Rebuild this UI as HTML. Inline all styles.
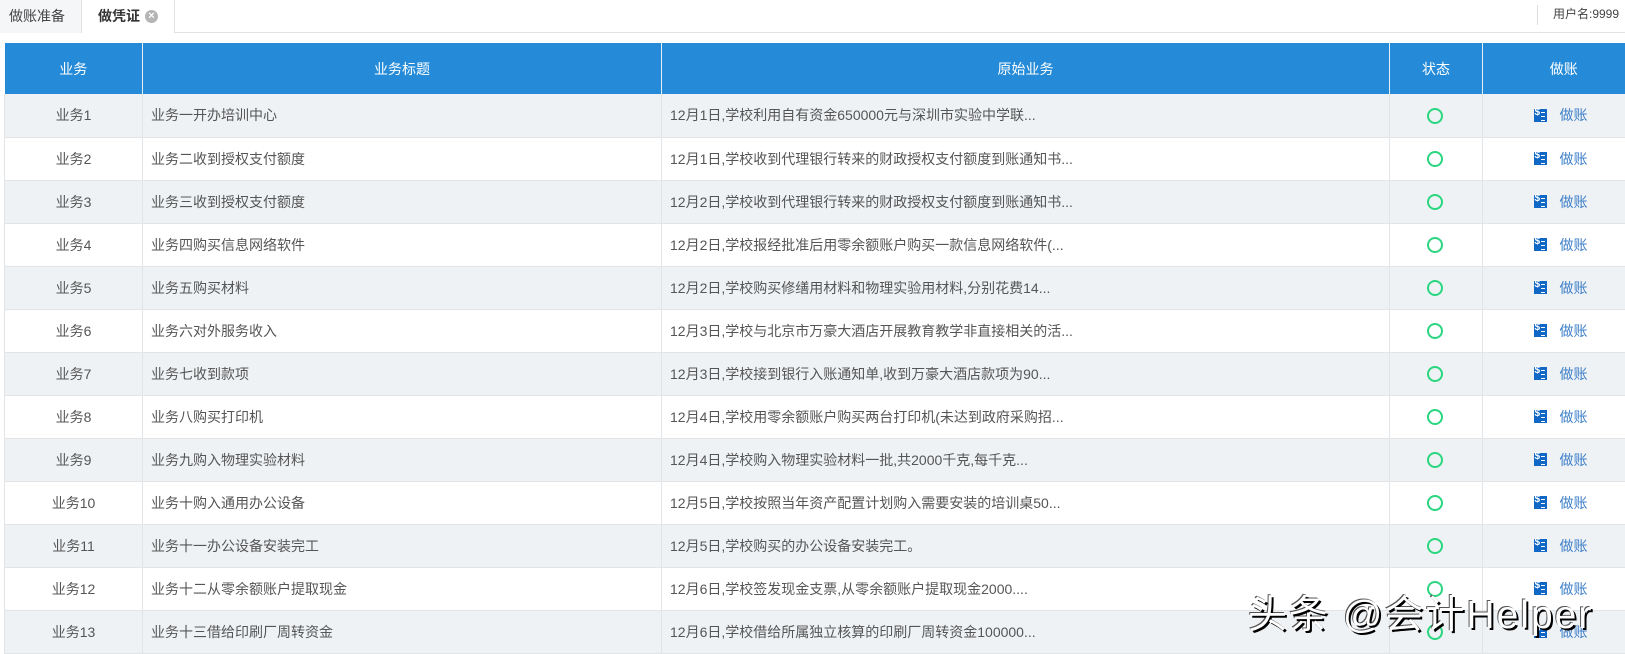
<!DOCTYPE html>
<html><head><meta charset="utf-8"><style>
*{margin:0;padding:0;box-sizing:border-box}
body{width:1625px;height:654px;overflow:hidden;background:#fff;font-family:"Liberation Sans","Noto Sans CJK SC",sans-serif;color:#555;position:relative}
.topbar{position:absolute;left:0;top:0;width:1625px;height:33px;border-bottom:1px solid #e2e2e2}
.tab1{position:absolute;left:0;top:0;width:82px;height:33px;background:#f4f6f8;border-right:1px solid #e2e2e2;font-size:14px;line-height:32px;padding-left:9px;color:#444}
.tab2{position:absolute;left:82px;top:0;width:93px;height:33px;background:#fff;border-right:1px solid #e2e2e2;font-size:14px;line-height:32px;padding-left:16px;color:#333;font-weight:bold}
.close{position:absolute;left:63px;top:10px;width:13px;height:13px;border-radius:50%;background:#b5b5b5;color:#fff;font-size:11px;line-height:13px;text-align:center;font-weight:bold}
.user{position:absolute;left:1537px;top:5px;height:20px;border-left:1px solid #ddd;padding-left:15px;font-size:12px;line-height:18px;color:#444}
table{position:absolute;left:4px;top:43px;border-collapse:collapse;width:1640px;table-layout:fixed}
th{background:#258bd8;color:#fff;font-weight:normal;font-size:14px;height:51px;border-left:1px solid #e8eef4;text-align:center}
td{height:43px;font-size:14px;border:1px solid #e2e4e6;border-top:none}
tr:nth-child(even) td{background:#eff2f5}
tr:nth-child(odd) td{background:#fff}
td.c{text-align:center}
td.l{padding-left:8px}
.circ{display:inline-block;width:16px;height:16px;border:2px solid #2ad67f;border-radius:50%;vertical-align:middle;margin-left:-2px}
.ic{display:inline-block;width:13px;height:13px;background:#1167c6;vertical-align:middle;position:relative;margin-left:-6px}
.ic:before{content:"$";position:absolute;left:1px;top:-2px;color:#fff;font-size:10px;font-weight:bold}
.ic:after{content:"";position:absolute;left:7px;top:3px;width:4px;height:7px;border-top:1px solid #fff;border-bottom:1px solid #fff;background:linear-gradient(#fff,#fff) 0 3px/4px 1px no-repeat}
.zz{color:#3d7fc8;margin-left:13px;vertical-align:middle}
.wm{position:absolute;left:1248px;top:584px;font-size:39px;color:#fff;text-shadow:2px 2px 0 #000,-1px -1px 0 #555;letter-spacing:2px;white-space:nowrap}
</style></head><body>
<div class="topbar">
<div class="tab1">做账准备</div>
<div class="tab2">做凭证<span class="close">×</span></div>
<div class="user">用户名:9999</div>
</div>
<table>
<colgroup><col style="width:138px"><col style="width:519px"><col style="width:728px"><col style="width:93px"><col style="width:162px"></colgroup>
<tr><th style="border-left:none">业务</th><th>业务标题</th><th>原始业务</th><th>状态</th><th>做账</th></tr>
<tr><td class="c">业务1</td><td class="l">业务一开办培训中心</td><td class="l">12月1日,学校利用自有资金650000元与深圳市实验中学联...</td><td class="c"><span class="circ"></span></td><td class="c"><span class="ic"></span><span class="zz">做账</span></td></tr>
<tr><td class="c">业务2</td><td class="l">业务二收到授权支付额度</td><td class="l">12月1日,学校收到代理银行转来的财政授权支付额度到账通知书...</td><td class="c"><span class="circ"></span></td><td class="c"><span class="ic"></span><span class="zz">做账</span></td></tr>
<tr><td class="c">业务3</td><td class="l">业务三收到授权支付额度</td><td class="l">12月2日,学校收到代理银行转来的财政授权支付额度到账通知书...</td><td class="c"><span class="circ"></span></td><td class="c"><span class="ic"></span><span class="zz">做账</span></td></tr>
<tr><td class="c">业务4</td><td class="l">业务四购买信息网络软件</td><td class="l">12月2日,学校报经批准后用零余额账户购买一款信息网络软件(...</td><td class="c"><span class="circ"></span></td><td class="c"><span class="ic"></span><span class="zz">做账</span></td></tr>
<tr><td class="c">业务5</td><td class="l">业务五购买材料</td><td class="l">12月2日,学校购买修缮用材料和物理实验用材料,分别花费14...</td><td class="c"><span class="circ"></span></td><td class="c"><span class="ic"></span><span class="zz">做账</span></td></tr>
<tr><td class="c">业务6</td><td class="l">业务六对外服务收入</td><td class="l">12月3日,学校与北京市万豪大酒店开展教育教学非直接相关的活...</td><td class="c"><span class="circ"></span></td><td class="c"><span class="ic"></span><span class="zz">做账</span></td></tr>
<tr><td class="c">业务7</td><td class="l">业务七收到款项</td><td class="l">12月3日,学校接到银行入账通知单,收到万豪大酒店款项为90...</td><td class="c"><span class="circ"></span></td><td class="c"><span class="ic"></span><span class="zz">做账</span></td></tr>
<tr><td class="c">业务8</td><td class="l">业务八购买打印机</td><td class="l">12月4日,学校用零余额账户购买两台打印机(未达到政府采购招...</td><td class="c"><span class="circ"></span></td><td class="c"><span class="ic"></span><span class="zz">做账</span></td></tr>
<tr><td class="c">业务9</td><td class="l">业务九购入物理实验材料</td><td class="l">12月4日,学校购入物理实验材料一批,共2000千克,每千克...</td><td class="c"><span class="circ"></span></td><td class="c"><span class="ic"></span><span class="zz">做账</span></td></tr>
<tr><td class="c">业务10</td><td class="l">业务十购入通用办公设备</td><td class="l">12月5日,学校按照当年资产配置计划购入需要安装的培训桌50...</td><td class="c"><span class="circ"></span></td><td class="c"><span class="ic"></span><span class="zz">做账</span></td></tr>
<tr><td class="c">业务11</td><td class="l">业务十一办公设备安装完工</td><td class="l">12月5日,学校购买的办公设备安装完工。</td><td class="c"><span class="circ"></span></td><td class="c"><span class="ic"></span><span class="zz">做账</span></td></tr>
<tr><td class="c">业务12</td><td class="l">业务十二从零余额账户提取现金</td><td class="l">12月6日,学校签发现金支票,从零余额账户提取现金2000....</td><td class="c"><span class="circ"></span></td><td class="c"><span class="ic"></span><span class="zz">做账</span></td></tr>
<tr><td class="c">业务13</td><td class="l">业务十三借给印刷厂周转资金</td><td class="l">12月6日,学校借给所属独立核算的印刷厂周转资金100000...</td><td class="c"><span class="circ"></span></td><td class="c"><span class="ic"></span><span class="zz">做账</span></td></tr>
</table>
<div class="wm">头条 @会计Helper</div>
</body></html>
